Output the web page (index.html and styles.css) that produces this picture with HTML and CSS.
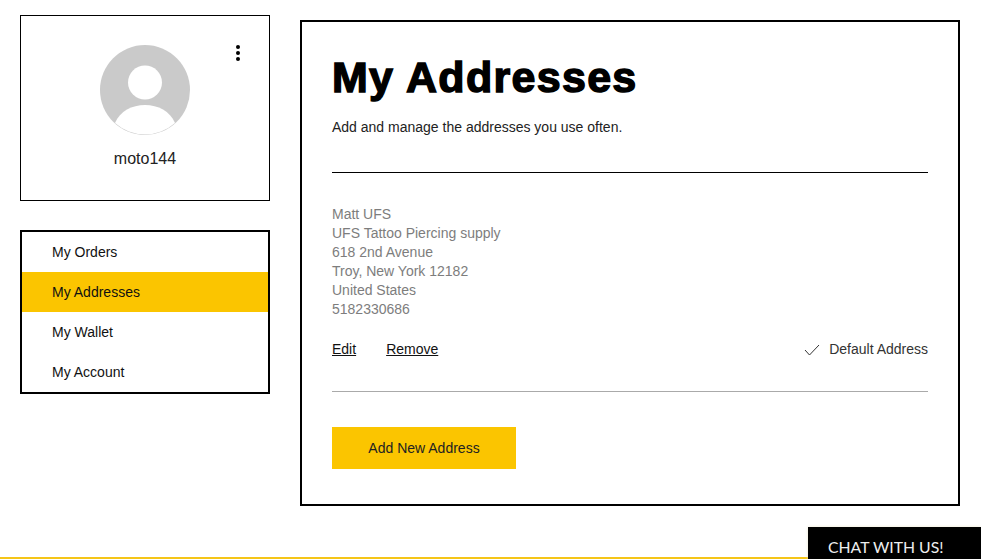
FILE: index.html
```html
<!DOCTYPE html>
<html lang="en">
<head>
<meta charset="utf-8">
<title>My Addresses</title>
<link rel="stylesheet" href="styles.css">
</head>
<body>
<div class="page">
  <aside class="sidebar">
    <section class="profile">
      <button class="more" aria-label="More"><span></span><span></span><span></span></button>
      <svg class="avatar" viewBox="0 0 90 90" width="90" height="90">
        <circle cx="45" cy="45" r="45" fill="#cacaca"/>
        <circle cx="45" cy="37.500" r="17" fill="#fff"/>
        <path d="M15 78 C20 66 32 60 45 60 C58 60 70 66 75 78 A45 45 0 0 1 15 78 Z" fill="#fff"/>
      </svg>
      <div class="username">moto144</div>
    </section>
    <nav class="menu">
      <a class="menu-item">My Orders</a>
      <a class="menu-item active">My Addresses</a>
      <a class="menu-item">My Wallet</a>
      <a class="menu-item">My Account</a>
    </nav>
  </aside>
  <main class="content">
    <h1 class="title">My Addresses</h1>
    <p class="intro">Add and manage the addresses you use often.</p>
    <div class="address">
      <div>Matt UFS</div>
      <div>UFS Tattoo Piercing supply</div>
      <div>618 2nd Avenue</div>
      <div>Troy, New York 12182</div>
      <div>United States</div>
      <div>5182330686</div>
    </div>
    <div class="actions">
      <a class="link">Edit</a>
      <a class="link">Remove</a>
      <span class="default">
        <svg viewBox="0 0 16 12" width="16" height="12"><path d="M1 6 L5.500 11 L15 1" fill="none" stroke="#333" stroke-width="1"/></svg>
        Default Address
      </span>
    </div>
    <button class="add">Add New Address</button>
  </main>
</div>
<div class="footer-line"></div>
<div class="chat">CHAT WITH US!</div>
</body>
</html>
```
FILE: styles.css
```css
* { box-sizing: border-box; }
html, body { margin: 0; height: 559px; overflow: hidden; background: #fff; }
body { position: relative; font-family: "Liberation Sans", Arial, sans-serif; color: #111; }
.page { display: flex; gap: 30px; padding: 15px 0 0 20px; align-items: flex-start; }
.sidebar { width: 250px; display: flex; flex-direction: column; gap: 29px; flex: none; }
.profile { position: relative; height: 186px; border: 1px solid #000; padding-top: 29px; display: flex; flex-direction: column; align-items: center; }
.avatar { display: block; }
.username { margin-top: 14px; font-size: 16px; line-height: 20px; color: #222; }
.more { position: absolute; top: 29px; right: 29px; width: 4px; padding: 0; border: 0; background: none; display: flex; flex-direction: column; gap: 2px; }
.more span { width: 4px; height: 4px; border-radius: 50%; background: #000; }
.menu { border: 2px solid #000; height: 164px; display: flex; flex-direction: column; }
.menu-item { height: 40px; padding-left: 30px; font-size: 14px; line-height: 40px; color: #111; }
.menu-item.active { background: #fbc500; }
.content { width: 660px; height: 486px; margin-top: 5px; border: 2px solid #000; padding: 30px; }
.title { margin: 0; font-size: 43px; line-height: 50px; font-weight: 700; color: #000; -webkit-text-stroke: 1.4px #000; letter-spacing: 1.3px; }
.intro { margin: 17px 0 0; padding-bottom: 37px; border-bottom: 1px solid #000; font-size: 14px; line-height: 16px; color: #222; }
.address { margin-top: 32px; font-size: 14px; line-height: 19px; color: #7d7d7d; }
.actions { display: flex; align-items: center; gap: 30px; margin-top: 21px; padding-bottom: 32px; border-bottom: 1px solid #aaa; font-size: 14px; line-height: 19px; }
.link { color: #111; text-decoration: underline; }
.default { margin-left: auto; display: flex; align-items: center; gap: 9px; color: #333; }
.add { display: block; width: 184px; height: 42px; margin-top: 35px; border: 0; padding: 0; background: #fbc500; font: 14px "Liberation Sans", Arial, sans-serif; color: #222; }
.footer-line { position: absolute; left: 0; right: 0; bottom: 0; height: 2px; background: #f5c518; }
.chat { position: absolute; right: 0; bottom: 0; width: 173px; height: 32px; padding: 11px 0 0 20px; background: #000; color: #eee; font-family: Lato, sans-serif; font-size: 15.800px; line-height: 17px; white-space: nowrap; box-shadow: 0 0 3px #eee9d0; }
```
